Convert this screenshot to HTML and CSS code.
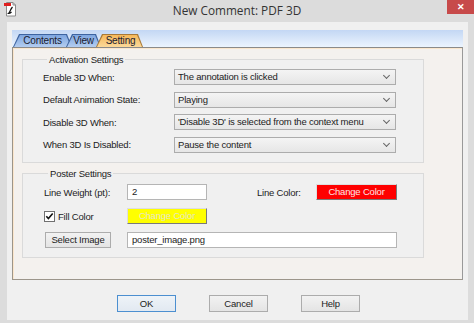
FILE: index.html
```html
<!DOCTYPE html>
<html>
  <head>
    <title>New Comment: PDF 3D</title>
    <link rel="stylesheet" href="styles.css">
  </head>

  <body>
    <div class="window">
      <div class="titlebar">
        <svg class="app-icon" width="13" height="16" viewBox="0 0 13 16">
          <path d="M2.5 1.5 H9 L11.5 4 V15 H2.5 Z" fill="#fff" stroke="#8a8a8a"/>
          <path d="M9 1.5 V4 H11.5" fill="none" stroke="#8a8a8a"/>
          <rect x="0" y="2" width="7" height="3" fill="#e02020"/>
          <path d="M8.5 6 C6.5 8 6 11 4.5 12.5 C6 12.5 7 11.5 7.5 11" fill="none" stroke="#111" stroke-width="1.2"/>
        </svg>
        <div class="title">New Comment: PDF 3D</div>
        <div class="close">&#x2715;</div>
      </div>

      <div class="client">
        <div class="tabs">
          <div class="tab-strip">
            <div class="tab"><div class="tab-face">Contents</div></div>
            <div class="tab tab-view"><div class="tab-face">View</div></div>
            <div class="tab tab-active"><div class="tab-face">Setting</div></div>
          </div>

          <div class="tab-panel">
            <fieldset class="group group-activation">
              <legend>Activation Settings</legend>
              <div class="field-row">
                <div class="field-label">Enable 3D When:</div>
                <div class="select">The annotation is clicked<span class="chevron"></span></div>
              </div>
              <div class="field-row">
                <div class="field-label">Default Animation State:</div>
                <div class="select">Playing<span class="chevron"></span></div>
              </div>
              <div class="field-row">
                <div class="field-label">Disable 3D When:</div>
                <div class="select">'Disable 3D' is selected from the context menu<span class="chevron"></span></div>
              </div>
              <div class="field-row">
                <div class="field-label">When 3D Is Disabled:</div>
                <div class="select">Pause the content<span class="chevron"></span></div>
              </div>
            </fieldset>

            <fieldset class="group group-poster">
              <legend>Poster Settings</legend>
              <div class="poster-row">
                <div class="poster-label">Line Weight (pt):</div>
                <div class="input input-short">2</div>
                <div class="line-color-label">Line Color:</div>
                <div class="color-btn color-red">Change Color</div>
              </div>
              <div class="poster-row">
                <div class="poster-label check">
                  <svg class="checkbox" width="11" height="11" viewBox="0 0 11 11">
                    <rect x="0.5" y="0.5" width="10" height="10" fill="#fff" stroke="#707070"/>
                    <path d="M2.3 5.3 L4.4 7.6 L8.7 2.6" fill="none" stroke="#111" stroke-width="1.6"/>
                  </svg>
                  Fill Color
                </div>
                <div class="color-btn color-yellow">Change Color</div>
              </div>
              <div class="poster-row">
                <div class="poster-label">
                  <div class="btn btn-select">Select Image</div>
                </div>
                <div class="input input-long">poster_image.png</div>
              </div>
            </fieldset>
          </div>
        </div>

        <div class="buttons">
          <div class="btn btn-dialog btn-default">OK</div>
          <div class="btn btn-dialog">Cancel</div>
          <div class="btn btn-dialog">Help</div>
        </div>
      </div>
    </div>
  </body>
</html>
```

FILE: styles.css
```css
* {
  box-sizing: border-box;
  margin: 0;
  padding: 0;
}

body {
  background: #dcdcdc;
  font-family: "Liberation Sans", Arial, sans-serif;
  font-size: 9.5px;
  letter-spacing: -0.2px;
  color: #1c1c1c;
}

.window {
  width: 474px;
  height: 323px;
  display: flex;
  flex-direction: column;
  background: #dcdcdc;
}

/* Title bar */
.titlebar {
  height: 22px;
  display: flex;
  align-items: flex-start;
}

.app-icon {
  margin: 1px 0 0 4px;
}

.title {
  flex: 1;
  text-align: center;
  font-family: "Open Sans", sans-serif;
  font-size: 11.8px;
  letter-spacing: 0;
  line-height: 20px;
  color: #333;
  padding-left: 10px;
}

.close {
  width: 27px;
  height: 14px;
  background: #c74a4a;
  color: #fff;
  font-size: 9px;
  line-height: 14px;
  text-align: center;
  font-weight: bold;
}

/* Client area */
.client {
  flex: 1;
  margin: 0 6px 3px 7px;
  background: #f0f0f0;
  padding: 8px 5px 0 5px;
  display: flex;
  flex-direction: column;
}

/* Tabs */
.tab-strip {
  height: 17px;
  background: linear-gradient(#c3d7f4, #ecf4fe);
  display: flex;
  align-items: flex-end;
  padding-left: 1px;
}

.tab {
  width: 59px;
  height: 13px;
  padding: 1px 1px 0 1px;
  background: #3e64a0;
  clip-path: polygon(6px 0, calc(100% - 5px) 0, 100% 100%, 0 100%);
}

.tab-face {
  height: 100%;
  background: linear-gradient(#7ea6e0, #b4cdf0);
  clip-path: polygon(6px 0, calc(100% - 5px) 0, 100% 100%, 0 100%);
  font-size: 10px;
  line-height: 12px;
  text-align: center;
  color: #1a2030;
}

.tab-view {
  width: 35px;
  margin-left: -6px;
}

.tab-active {
  width: 47px;
  margin-left: -5px;
  background: #a87a3a;
}

.tab-active .tab-face {
  background: linear-gradient(#f6b85a, #fcd99a);
  padding-left: 2px;
}

.tab-panel {
  height: 233px;
  border: 1px solid #9c958a;
  border-top-color: #8a8a8a;
  border-right-color: #999;
  box-shadow: inset 1px 1px 0 #fbe6cc;
  background: #f4f1ee;
  padding: 6px 38px 0 9px;
}

/* Group boxes */
.group {
  border: 1px solid #dadada;
  background: #f0f0f0;
  padding: 0 0 0 20px;
}

.group legend {
  margin-left: 4px;
  padding: 0 2px;
  font-size: 9.5px;
  line-height: 11px;
}

.group-activation {
  height: 109px;
  padding-top: 4px;
  display: flex;
  flex-direction: column;
  gap: 6.5px;
}

.field-row {
  display: flex;
  align-items: center;
  height: 16px;
}

.field-label {
  width: 131px;
}

.select {
  width: 222px;
  height: 16px;
  border: 1px solid #acacac;
  background: linear-gradient(#f4f4f4, #e6e6e6);
  line-height: 14px;
  padding-left: 3px;
  display: flex;
  justify-content: space-between;
}

.chevron {
  width: 5px;
  height: 5px;
  margin: 3px 6px 0 0;
  border-right: 1.3px solid #666;
  border-bottom: 1.3px solid #666;
  transform: rotate(45deg);
}

.group-poster {
  margin-top: 5px;
  height: 90px;
  padding-top: 5px;
  padding-left: 21px;
}

.poster-row {
  display: flex;
  align-items: center;
  height: 16px;
  margin-bottom: 8px;
}

.poster-label {
  width: 83px;
}

.check {
  display: flex;
  align-items: center;
  gap: 3px;
}

.input {
  height: 16px;
  background: #fff;
  border: 1px solid #b5b5b5;
  line-height: 14px;
  padding-left: 4px;
}

.input-short {
  width: 80px;
}

.input-long {
  width: 270px;
}

.line-color-label {
  margin-left: 50px;
  width: 59px;
}

.color-btn {
  width: 81px;
  height: 16px;
  line-height: 14px;
  text-align: center;
  border: 1px solid;
  border-color: #dedede #7a7a7a #7a7a7a #dedede;
}

.color-red {
  background: #ff0000;
  color: #ffe4e4;
}

.color-yellow {
  width: 80px;
  background: #ffff00;
  color: #e6e6c4;
}

/* Buttons */
.btn {
  height: 16px;
  border: 1px solid #acacac;
  background: linear-gradient(#f2f2f2, #e4e4e4);
  line-height: 14px;
  text-align: center;
}

.btn-select {
  width: 66px;
  margin-left: 1px;
}

.buttons {
  display: flex;
  gap: 33px;
  padding: 15px 0 0 105px;
}

.btn-dialog {
  width: 59px;
  height: 17px;
  line-height: 15px;
}

.btn-default {
  border-color: #4c8fd0;
  background: linear-gradient(#eef3f8, #e2e9f1);
}
```
